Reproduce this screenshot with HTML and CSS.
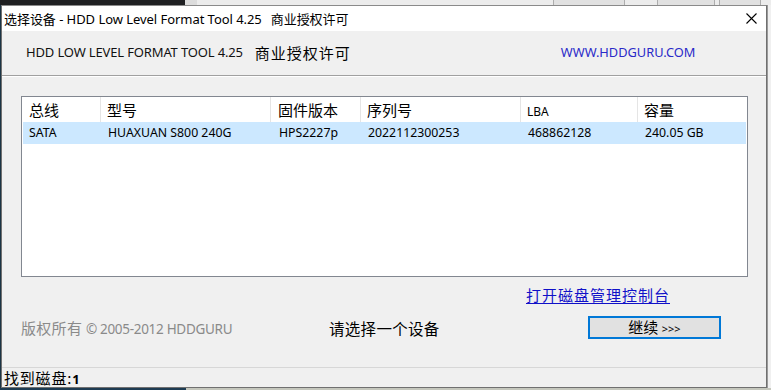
FILE: index.html
```html
<!DOCTYPE html>
<html lang="zh-CN">
<head>
  <meta charset="UTF-8">
  <title>选择设备 - HDD Low Level Format Tool 4.25</title>
  <link rel="stylesheet" href="styles.css">
</head>
<body>
  <div class="desk-top">
    <div class="desk-dark"></div>
    <div class="desk-light">
      <span class="stub stub-a"></span>
      <span class="stub stub-b"></span>
      <span class="stub stub-c"></span>
    </div>
  </div>

  <div class="desk-mid">
    <div class="edge-left"></div>
    <div class="window">
      <div class="titlebar">
        <span class="title">选择设备 - HDD Low Level Format Tool 4.25<span class="title-gap"></span>商业授权许可</span>
        <svg class="close" width="11" height="11" viewBox="0 0 11 11">
          <path d="M0.5 0.5 L10.5 10.5 M10.5 0.5 L0.5 10.5" stroke="#000" stroke-width="1.1" fill="none"/>
        </svg>
      </div>

      <div class="header">
        <span class="app-name">HDD LOW LEVEL FORMAT TOOL 4.25</span>
        <span class="licence">商业授权许可</span>
        <span class="site">WWW.HDDGURU.COM</span>
      </div>

      <div class="content">
        <div class="list">
          <div class="row head">
            <div class="cell">总线</div>
            <div class="cell">型号</div>
            <div class="cell">固件版本</div>
            <div class="cell">序列号</div>
            <div class="cell small">LBA</div>
            <div class="cell">容量</div>
          </div>
          <div class="row selected">
            <div class="cell">SATA</div>
            <div class="cell">HUAXUAN S800 240G</div>
            <div class="cell">HPS2227p</div>
            <div class="cell">2022112300253</div>
            <div class="cell">468862128</div>
            <div class="cell">240.05 GB</div>
          </div>
        </div>

        <div class="link-row">
          <a class="console-link" href="#">打开磁盘管理控制台</a>
        </div>

        <div class="action-row">
          <span class="copyright">版权所有 <span class="latin">© 2005-2012 HDDGURU</span></span>
          <span class="prompt">请选择一个设备</span>
          <button class="continue">继续 <span class="arrows">&gt;&gt;&gt;</span></button>
        </div>
      </div>

      <div class="statusbar">找到磁盘:<b>1</b></div>
    </div>
    <div class="edge-right"></div>
  </div>

  <div class="desk-bottom">
    <div class="desk-blue"></div>
    <div class="desk-grey"></div>
  </div>
</body>
</html>
```

FILE: styles.css
```css
body {
  margin: 0;
  width: 771px;
  height: 390px;
  overflow: hidden;
  background: #f0f0f0;
  font-family: "Noto Sans", "Noto Sans CJK SC", sans-serif;
  color: #000;
}

/* desktop around the dialog */
.desk-top {
  display: flex;
  height: 5px;
  overflow: hidden;
}
.desk-dark {
  width: 185px;
  background: #1f2022;
}
.desk-light {
  flex: 1;
  background: #ececec;
  position: relative;
  border-left: 12px solid #dcdcdc;
}
.stub {
  position: absolute;
  top: -2px;
  height: 6px;
  border: 1px solid #adadad;
  background: #e1e1e1;
}
.stub-a { left: 356px; width: 70px; }
.stub-b { left: 460px; width: 56px; }
.stub-c { left: 522px; width: 40px; }

.desk-mid {
  display: flex;
  height: 383px;
}
.edge-left {
  width: 1px;
  background: #1b3445;
}
.edge-right {
  width: 3px;
  background: #f0f0f0;
  border-left: 1px solid #9a9a9a;
}

.desk-bottom {
  display: flex;
  height: 2px;
}
.desk-blue {
  width: 186px;
  background: #1d3b52;
}
.desk-grey {
  flex: 1;
  background: #c5c7bd;
}

/* dialog window */
.window {
  width: 765px;
  border: 1px solid #707070;
  border-top-color: #8a8a8a;
  background: #f0f0f0;
  display: flex;
  flex-direction: column;
}

.titlebar {
  height: 25px;
  background: #fff;
  display: flex;
  align-items: center;
  justify-content: space-between;
  padding: 0 9px 0 2px;
}
.title {
  font-size: 13px;
  letter-spacing: -0.05px;
}
.title-gap {
  display: inline-block;
  width: 9px;
}
.close {
  display: block;
}

.header {
  height: 45px;
  box-sizing: border-box;
  border-bottom: 1px solid #a0a0a0;
  box-shadow: 0 1px 0 #fff;
  display: flex;
  align-items: center;
  padding: 0 0 2px 24px;
}
.app-name {
  font-size: 13px;
  letter-spacing: -0.15px;
  color: #111;
}
.licence {
  font-family: "Noto Sans CJK SC", sans-serif;
  font-size: 15px;
  letter-spacing: 1px;
  margin-left: 12px;
}
.site {
  font-size: 12.8px;
  color: #2a2ac8;
  margin-left: 210px;
  letter-spacing: 0;
}

.content {
  flex: 1;
  padding: 20px 18px 0 19px;
}

.list {
  height: 179px;
  border: 1px solid #828790;
  background: #fff;
}
.row {
  display: grid;
  grid-template-columns: 79px 170px 90px 160px 117px 1fr;
}
.row.head {
  height: 25px;
}
.row.head .cell {
  font-family: "Noto Sans CJK SC", sans-serif;
  font-size: 15px;
  line-height: 25px;
  border-right: 1px solid #e5e5e5;
}
.row.head .cell:last-child {
  border-right: 0;
  margin-right: 2px;
}
.row.head .cell.small {
  font-family: "Noto Sans", sans-serif;
  font-size: 12px;
  padding-top: 2px;
}
.cell {
  padding-left: 7px;
  white-space: nowrap;
  overflow: hidden;
}
.row .cell:nth-child(2),
.row .cell:nth-child(4),
.row .cell:nth-child(5),
.row .cell:nth-child(6) {
  padding-left: 6px;
}
.row.selected {
  height: 22px;
  background: #cce8ff;
  margin: 0 1px 0 1px;
  font-size: 12.3px;
  line-height: 22px;
}
.row.selected .cell:first-child {
  padding-left: 6px;
}

.link-row {
  display: flex;
  justify-content: flex-end;
  padding: 8px 78px 0 0;
  height: 20px;
}
.console-link {
  font-family: "Noto Sans CJK SC", sans-serif;
  font-size: 15px;
  letter-spacing: 1px;
  line-height: 20px;
  color: #1010c8;
  text-decoration: underline;
  text-underline-offset: 2px;
}

.action-row {
  display: grid;
  grid-template-columns: 308px 259px 133px;
  align-items: center;
  margin-top: 11px;
}
.copyright {
  color: #8a8a8a;
  font-family: "Noto Sans CJK SC", sans-serif;
  font-size: 15px;
  letter-spacing: 0.3px;
}
.copyright .latin {
  font-family: "Noto Sans", sans-serif;
  font-size: 13.5px;
  letter-spacing: -0.3px;
}
.prompt {
  font-family: "Noto Sans CJK SC", sans-serif;
  font-size: 15.5px;
  letter-spacing: 0.3px;
}
.continue {
  height: 23px;
  width: 133px;
  border: 2px solid #0078d7;
  background: #e1e1e1;
  font-family: "Noto Sans CJK SC", sans-serif;
  font-size: 15px;
  line-height: 17px;
  padding: 0;
  color: #000;
}
.continue .arrows {
  font-family: "Noto Sans", sans-serif;
  font-size: 11px;
}

.statusbar {
  height: 19px;
  border-top: 1px solid #d7d7d7;
  padding-left: 2px;
  font-family: "Noto Sans CJK SC", sans-serif;
  font-size: 15px;
  letter-spacing: 0.8px;
  line-height: 19px;
}
.statusbar b {
  font-family: "Noto Sans", sans-serif;
  font-size: 13px;
}
```
